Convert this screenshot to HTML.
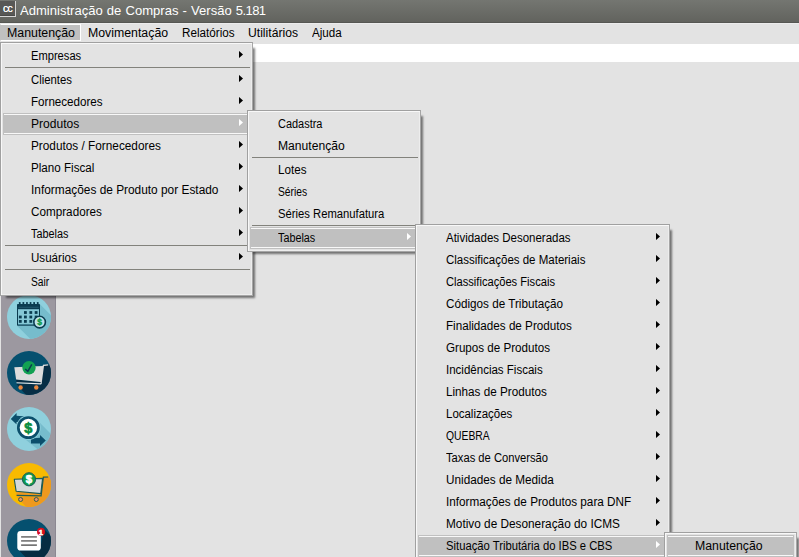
<!DOCTYPE html>
<html lang="pt-BR"><head><meta charset="utf-8"><title>Administração de Compras - Versão 5.181</title>
<style>
html,body{margin:0;padding:0}
body{width:799px;height:557px;overflow:hidden;position:relative;background:#e3e3e3;
 font-family:"Liberation Sans",sans-serif;font-size:12px;color:#000}
#titlebar{position:absolute;left:0;top:0;width:799px;height:23px;background:linear-gradient(#747671,#62635e 95.5%,#565753 95.7%)}
#appicon{position:absolute;left:0;top:1px;width:15px;height:15px;background:#585856;border-right:1px solid #d6d6d6;border-bottom:1px solid #d6d6d6;box-shadow:inset 0 -1px 0 #4a4a48}
#appicon span{position:absolute;left:3px;top:0;font-size:10.5px;line-height:15px;color:#fff;letter-spacing:-0.7px;text-shadow:0 0 .4px #fff}
#title{transform-origin:0 50%;word-spacing:.5px;position:absolute;left:20px;top:0;font-size:13px;line-height:21px;color:#fff;white-space:nowrap}
#menubar{position:absolute;left:0;top:23px;width:799px;height:19px;background:#e3e3e3;border-top:1px solid #ececec;box-sizing:border-box}
.mb{position:absolute;top:0;height:17px;box-sizing:border-box}
.mb span{transform-origin:0 50%;position:absolute;top:1px;line-height:17px;white-space:nowrap}
.mb.act{background:#c0c0c0;border:1px solid #fff;border-left-color:#c0c0c0}
.mb.act span{left:6px !important;top:0}
#toolbar{position:absolute;left:0;top:44px;width:799px;height:18px;background:#fff}
#sidebar{position:absolute;left:1px;top:62px;width:55px;height:495px;background:#9c98a0;box-sizing:border-box;border-right:1px solid #8c8892}
.menu{position:absolute;box-sizing:border-box;background:#e3e3e3;border:1px solid;border-color:#a0a0a0 #a6a6a6 #a6a6a6 #a0a0a0;
 box-shadow:inset 1px 1px 0 #f8f8f8, inset -1px -1px 0 #ededed, 4px 4px 2px -2px rgba(0,0,0,.5)}
/* children are positioned relative to padding box = outer+1; subtract 1 */
.it{position:absolute;left:-1px;right:-1px;height:22px}
.it span{transform-origin:0 50%;position:absolute;left:31px;top:0;line-height:22px;white-space:nowrap}
.it b{display:none}
.it.hl b{display:block;position:absolute;left:3px;right:3px;top:0;height:22px;background:#c0c0c0}
.it.hl b::before,.it.hl b::after{content:'';position:absolute;left:1px;right:1px;height:1px;background:#f8f8f8}
.it.hl b::before{top:1px}.it.hl b::after{bottom:1px}
.it i{position:absolute;right:10px;top:5.8px;width:4.2px;height:7.4px;background:#000;clip-path:polygon(0 0,100% 50%,0 100%)}
.it.hl i{background:#fff}
.sep{position:absolute;left:4px;right:2px;height:1px;background:#82827c}
.ic{position:absolute;left:6px;display:block}

</style></head><body>
<div id="titlebar"><div id="appicon"><span>cc</span></div><span id="title" style="transform:scaleX(1.0043)">Administração de Compras - Versão <span style="letter-spacing:-0.6px">5.181</span></span></div>
<div id="menubar">
<div class="mb act" style="left:0;width:81px"><span style="left:7px;transform:scaleX(1.0289)">Manutenção</span></div>
<div class="mb" style="left:81px"><span style="left:7px;transform:scaleX(1.0261)">Movimentação</span></div>
<div class="mb" style="left:175px"><span style="left:7px;transform:scaleX(0.9736)">Relatórios</span></div>
<div class="mb" style="left:241px"><span style="left:7px;transform:scaleX(1.0126)">Utilitários</span></div>
<div class="mb" style="left:305px"><span style="left:7px;transform:scaleX(0.968)">Ajuda</span></div>
</div>
<div id="toolbar"></div>
<div id="sidebar">
<svg class="ic" style="top:233px" width="44" height="44" viewBox="0 0 44 44">
<defs><clipPath id="cc"><circle cx="22" cy="22" r="22"/></clipPath></defs>
<circle cx="22" cy="22" r="22" fill="#8fd0dd"/>
<g clip-path="url(#cc)">
<polygon points="33,9.2 60,36.2 60,60 39.5,60 10,30.8 33,30.8" fill="#76bccc"/>
<g fill="#0b3c50">
<rect x="11.9" y="6.9" width="1.7" height="4" rx=".6"/><rect x="15.5" y="6.9" width="1.7" height="4" rx=".6"/><rect x="19.1" y="6.9" width="1.7" height="4" rx=".6"/><rect x="22.7" y="6.9" width="1.7" height="4" rx=".6"/><rect x="26.3" y="6.9" width="1.7" height="4" rx=".6"/><rect x="29.9" y="6.9" width="1.7" height="4" rx=".6"/>
<rect x="10" y="9.1" width="23" height="21.7" rx=".8"/>
</g>
<rect x="11" y="14.2" width="21" height="15" fill="#85c8d6"/>
<rect x="11" y="29" width="21" height="1.1" fill="#3f7f92"/>
<rect x="11.4" y="11.8" width="20.2" height=".9" fill="#2d6579" opacity=".8"/>
<g fill="#0b3c50">
<rect x="17" y="16.1" width="2.8" height="2.8"/><rect x="22.4" y="16.1" width="2.8" height="2.8"/><rect x="27.7" y="16.1" width="2.8" height="2.8"/>
<rect x="11.9" y="20.6" width="2.8" height="2.8"/><rect x="17" y="20.6" width="2.8" height="2.8"/><rect x="22.4" y="20.6" width="2.8" height="2.8"/><rect x="27.7" y="20.6" width="2.8" height="2.8"/>
<rect x="11.9" y="25" width="2.8" height="2.8"/><rect x="17" y="25" width="2.8" height="2.8"/><rect x="22.4" y="25" width="2.8" height="2.8"/>
</g>
<circle cx="32.6" cy="27.1" r="5.8" fill="#bfe3ea" stroke="#0b3c50" stroke-width="1.6"/>
<text x="32.6" y="30.1" font-family="'Liberation Sans',sans-serif" font-weight="bold" font-size="8.6" fill="#0c9a47" stroke="#0c9a47" stroke-width=".35" text-anchor="middle">$</text>
</g></svg>

<svg class="ic" style="top:289px" width="44" height="44" viewBox="0 0 44 44">
<circle cx="22" cy="22" r="22" fill="#05506f"/>
<g clip-path="url(#cc)">
<polygon points="41.2,13.4 60,32.2 60,60 33,60 9.4,33 34.2,33.2 36.2,14" fill="#072e45"/>
<polygon points="9.1,28.6 33.9,31 34.2,32.9 9.6,31.7" fill="#072e45"/>
<polygon points="7.3,16.3 35.6,15 36,13.7 41.1,13.3 41.2,14.5 37,14.9 34.6,33 33.4,32.9 33.7,30.9 9.1,28.4" fill="#dcdcdc"/>
<polygon points="9.5,31.2 34.2,32.3 34.2,33.4 9.5,32.3" fill="#e8e8e8"/>
<circle cx="13.6" cy="36.5" r="2.2" fill="#ea8840"/><circle cx="29.3" cy="36.5" r="2.2" fill="#ea8840"/>
<circle cx="22" cy="16.8" r="6.7" fill="#12a152"/>
<polyline points="18.2,18 20.8,20.4 24.8,13.3" fill="none" stroke="#0c3a52" stroke-width="1.5"/>
</g></svg>

<svg class="ic" style="top:345px" width="44" height="44" viewBox="0 0 44 44">
<circle cx="22" cy="22" r="22" fill="#8fd0dd"/>
<g clip-path="url(#cc)">
<polygon points="29.6,12.6 60,43 60,60 53,60 13.4,28.6" fill="#76bccc"/>
<g fill="#0b4f6c">
<polygon points="3.8,11.9 9.6,6 9.6,8.8 19,9.4 19,15 9.6,15 9.6,17.6"/>
<polygon points="38.8,33.4 33,27.9 33,30.8 24,31.5 24,36.6 33,36.6 33,38.9"/>
</g>
<circle cx="21.4" cy="20.6" r="12.3" fill="#8fd0dd"/>
<circle cx="21.4" cy="20.6" r="10.1" fill="#fff" stroke="#0b4f6c" stroke-width="2.7"/>
<text x="21.4" y="26.4" font-family="'Liberation Sans',sans-serif" font-weight="bold" font-size="14.5" fill="#0b8d42" stroke="#0b8d42" stroke-width=".7" text-anchor="middle">$</text>
</g></svg>

<svg class="ic" style="top:401px" width="44" height="44" viewBox="0 0 44 44">
<circle cx="22" cy="22" r="22" fill="#f8ba00"/>
<g clip-path="url(#cc)">
<polygon points="41.2,13.6 60,32.4 60,60 34,60 9.4,33.4 34.2,33.2 36.2,14" fill="#ee991e"/>
<polygon points="9.1,28.2 33.8,30.6 34.1,32.9 9.6,32.4" fill="#ee991e"/>
<polygon points="7.3,16.3 35.6,15.4 33.8,30.6 9.1,28.2" fill="#d5d9d9" stroke="#1b5a58" stroke-width="1.1" stroke-linejoin="round"/>
<polyline points="41.2,14 36.4,14.2 34.1,32.9 9.6,32.4" fill="none" stroke="#1b5a58" stroke-width="1.2"/>
<circle cx="13.6" cy="36.5" r="2" fill="#f1926a" stroke="#1b5a58" stroke-width=".9"/><circle cx="29.3" cy="36.5" r="2" fill="#f1926a" stroke="#1b5a58" stroke-width=".9"/>
<circle cx="22" cy="16.3" r="6.6" fill="#0f9a4c" stroke="#1b5a58" stroke-width="1"/>
<text x="22" y="20.2" font-family="'Liberation Sans',sans-serif" font-weight="bold" font-size="11.5" fill="#fff" stroke="#fff" stroke-width=".6" text-anchor="middle">$</text>
</g></svg>

<svg class="ic" style="top:457px" width="44" height="44" viewBox="0 0 44 44">
<circle cx="22" cy="22" r="22" fill="#05506f"/>
<g clip-path="url(#cc)">
<polygon points="36.9,10 60,33.1 60,60 40.5,60 12,31.6 33,31.6" fill="#062d42"/>
<rect x="10.3" y="12" width="23.5" height="19.6" rx="3.4" fill="#fff"/>
<rect x="14.1" y="17.1" width="15.8" height="1.6" fill="#747474"/><rect x="14.1" y="21.1" width="15.8" height="1.6" fill="#747474"/><rect x="14.1" y="25.5" width="15.8" height="1.2" fill="#3a3a3a"/>
<circle cx="34" cy="12.8" r="4" fill="#d8101c"/>
<text x="33.9" y="15.5" font-family="'Liberation Sans',sans-serif" font-weight="bold" font-size="7.5" fill="#fff" stroke="#fff" stroke-width=".5" text-anchor="middle">1</text>
</g></svg>

</div>
<div class="menu " style="left:0px;top:42px;width:253px;height:254px">
<div class="it" style="top:2px"><b></b><span style="transform:scaleX(0.9283)">Empresas</span><i></i></div>
<div class="sep" style="top:24px"></div>
<div class="it" style="top:26px"><b></b><span style="transform:scaleX(0.9442)">Clientes</span><i></i></div>
<div class="it" style="top:48px"><b></b><span style="transform:scaleX(0.9671)">Fornecedores</span><i></i></div>
<div class="it hl" style="top:70px"><b></b><span style="transform:scaleX(1.0042)">Produtos</span><i></i></div>
<div class="it" style="top:92px"><b></b><span style="transform:scaleX(0.9832)">Produtos / Fornecedores</span><i></i></div>
<div class="it" style="top:114px"><b></b><span style="transform:scaleX(0.9688)">Plano Fiscal</span><i></i></div>
<div class="it" style="top:136px"><b></b><span style="transform:scaleX(0.9894)">Informações de Produto por Estado</span><i></i></div>
<div class="it" style="top:158px"><b></b><span style="transform:scaleX(0.9754)">Compradores</span><i></i></div>
<div class="it" style="top:180px"><b></b><span style="transform:scaleX(0.9026)">Tabelas</span><i></i></div>
<div class="sep" style="top:202px"></div>
<div class="it" style="top:204px"><b></b><span style="transform:scaleX(0.9652)">Usuários</span><i></i></div>
<div class="sep" style="top:226px"></div>
<div class="it" style="top:228px"><b></b><span style="transform:scaleX(0.8556)">Sair</span></div>
</div>
<div class="menu " style="left:247px;top:110px;width:174px;height:142px">
<div class="it" style="top:2px"><b></b><span style="transform:scaleX(0.9133)">Cadastra</span></div>
<div class="it" style="top:24px"><b></b><span style="transform:scaleX(1.0092)">Manutenção</span></div>
<div class="sep" style="top:46px"></div>
<div class="it" style="top:48px"><b></b><span style="transform:scaleX(0.9715)">Lotes</span></div>
<div class="it" style="top:70px"><b></b><span style="transform:scaleX(0.8553)">Séries</span></div>
<div class="it" style="top:92px"><b></b><span style="transform:scaleX(0.9381)">Séries Remanufatura</span></div>
<div class="sep" style="top:114px"></div>
<div class="it hl" style="top:116px"><b></b><span style="transform:scaleX(0.8996)">Tabelas</span><i></i></div>
</div>
<div class="menu " style="left:415px;top:224px;width:255px;height:338px">
<div class="it" style="top:2px"><b></b><span style="transform:scaleX(0.9577)">Atividades Desoneradas</span><i></i></div>
<div class="it" style="top:24px"><b></b><span style="transform:scaleX(0.9587)">Classificações de Materiais</span><i></i></div>
<div class="it" style="top:46px"><b></b><span style="transform:scaleX(0.9283)">Classificações Fiscais</span><i></i></div>
<div class="it" style="top:68px"><b></b><span style="transform:scaleX(0.975)">Códigos de Tributação</span><i></i></div>
<div class="it" style="top:90px"><b></b><span style="transform:scaleX(0.9719)">Finalidades de Produtos</span><i></i></div>
<div class="it" style="top:112px"><b></b><span style="transform:scaleX(0.9683)">Grupos de Produtos</span><i></i></div>
<div class="it" style="top:134px"><b></b><span style="transform:scaleX(0.96)">Incidências Fiscais</span><i></i></div>
<div class="it" style="top:156px"><b></b><span style="transform:scaleX(0.9746)">Linhas de Produtos</span><i></i></div>
<div class="it" style="top:178px"><b></b><span style="transform:scaleX(0.9559)">Localizações</span><i></i></div>
<div class="it" style="top:200px"><b></b><span style="transform:scaleX(0.8627)">QUEBRA</span><i></i></div>
<div class="it" style="top:222px"><b></b><span style="transform:scaleX(0.9321)">Taxas de Conversão</span><i></i></div>
<div class="it" style="top:244px"><b></b><span style="transform:scaleX(0.9794)">Unidades de Medida</span><i></i></div>
<div class="it" style="top:266px"><b></b><span style="transform:scaleX(0.9777)">Informações de Produtos para DNF</span><i></i></div>
<div class="it" style="top:288px"><b></b><span style="transform:scaleX(0.9841)">Motivo de Desoneração do ICMS</span><i></i></div>
<div class="it hl" style="top:310px"><b></b><span style="transform:scaleX(0.9375)">Situação Tributária do IBS e CBS</span><i></i></div>
</div>
<div class="menu " style="left:664px;top:532px;width:133px;height:30px">
<div class="it hl" style="top:2px"><b></b><span style="transform:scaleX(1.0246)">Manutenção</span></div>
</div>
</body></html>
